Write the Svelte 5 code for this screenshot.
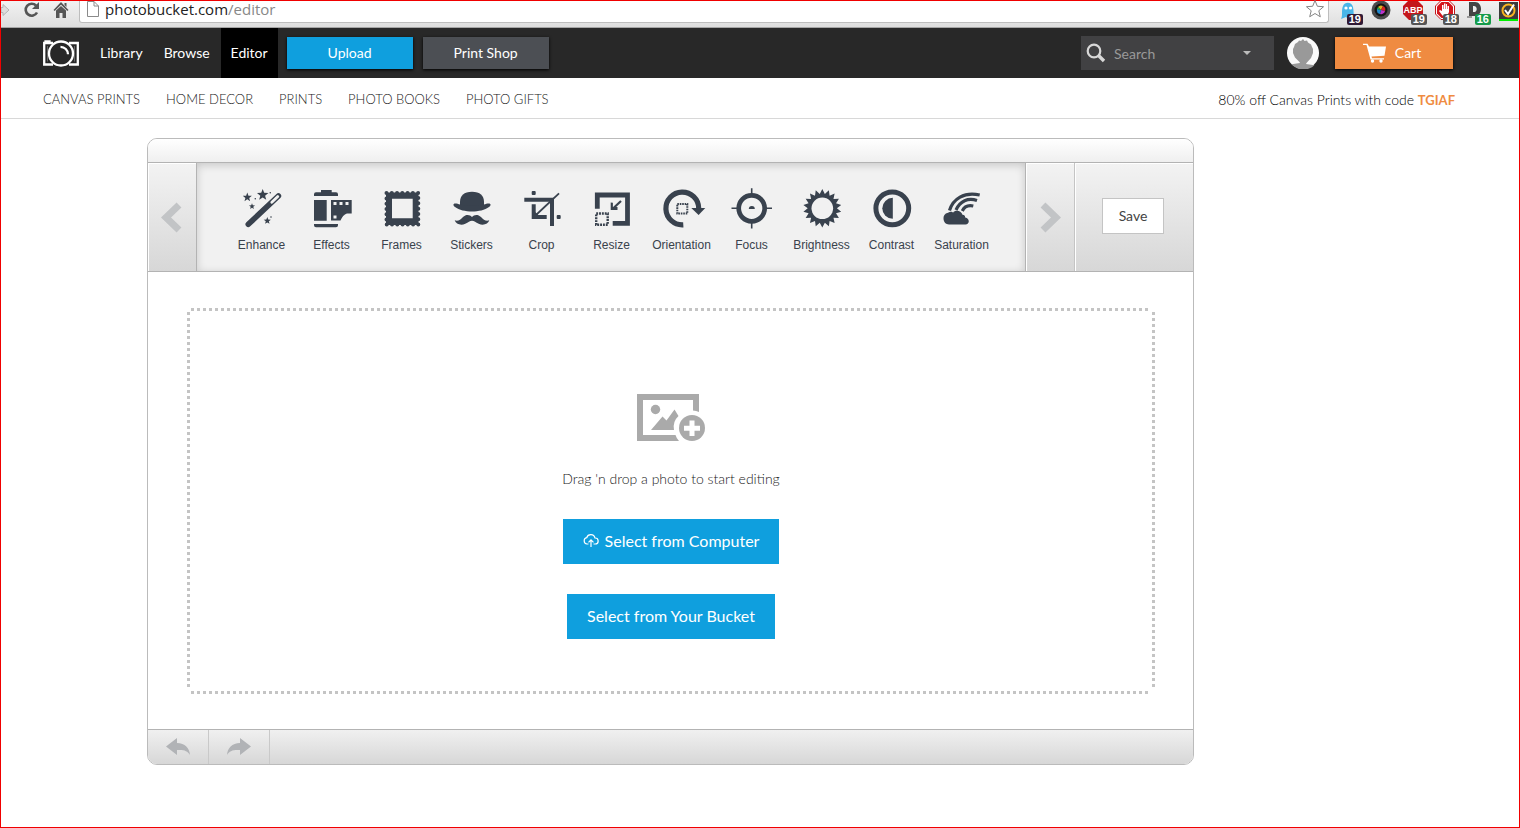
<script lang="ts">
	type Dot = { x: number; y: number; r: number };

	const navLinks = ['Library', 'Browse', 'Editor'];
	const shopLinks = ['Canvas Prints', 'Home Decor', 'Prints', 'Photo Books', 'Photo Gifts'];
	const tools = ['Enhance', 'Effects', 'Frames', 'Stickers', 'Crop', 'Resize', 'Orientation', 'Focus', 'Brightness', 'Contrast', 'Saturation'];

	let activeNav = $state('Editor');
	let activeTool = $state('');
	let query = $state('');

	function star(cx: number, cy: number, outer: number, inner: number, points: number) {
		let out: string[] = [];
		for (let i = 0; i < points * 2; i++) {
			const r = i % 2 ? inner : outer;
			const a = (Math.PI * i) / points - Math.PI / 2;
			out.push(`${(cx + r * Math.cos(a)).toFixed(2)},${(cy + r * Math.sin(a)).toFixed(2)}`);
		}
		return out.join(' ');
	}

	const sparkles: Dot[] = [
		{ x: 5.3, y: 8.3, r: 4.8 },
		{ x: 20.7, y: 5.9, r: 6 },
		{ x: 10, y: 17.4, r: 3.2 },
		{ x: 25.3, y: 31.8, r: 3.8 }
	];
</script>

<svelte:head><title>Photobucket Editor</title></svelte:head>

<div class="page">
	<div class="browser">
		<div class="browser-nav">
			<button aria-label="Forward">
				<svg width="10" height="18" viewBox="0 0 10 18"><path d="M0 6.500h2V3.500l6 5.500-6 5.500v-3H0z" fill="#ddd" stroke="#b5b5b5" /></svg>
			</button>
			<button aria-label="Reload">
				<svg width="18" height="18" viewBox="0 0 18 18"><path d="M14 11.500a6 6 0 1 1-1-7" fill="none" stroke="#555" stroke-width="2.600" /><path d="M16 1v7H9z" fill="#555" /></svg>
			</button>
			<button aria-label="Home">
				<svg width="16" height="18" viewBox="0 0 16 18"><path d="M8 1l7.500 8-1.200 1L8 3.800 1.700 10 .5 9z M3 9.600L8 5l5 4.600V17H9.500v-5h-3v5H3z M11.500 2h2v4l-2-2z" fill="#555" /></svg>
			</button>
		</div>
		<div class="omnibox">
			<svg width="12" height="16" viewBox="0 0 12 16"><path d="M.5.500H7L11.500 5v10.500H.5z M7 .500V5h4.500" fill="#fff" stroke="#8a8a8a" /></svg>
			<span class="url">photobucket.com<span class="path">/editor</span></span>
			<button class="bookmark" aria-label="Bookmark this page">
				<svg width="20" height="20" viewBox="0 0 20 20"><polygon points={star(10, 10.5, 9, 4, 5)} fill="#fff" stroke="#858585" /></svg>
			</button>
		</div>
		<div class="extensions">
			<button aria-label="Ghostery">
				<svg width="18" height="18" viewBox="0 0 18 18"><path d="M2 17C4 13 2 9 4 4c2-5 9-4 10 1 1 4 0 8 2 12l-3-2-3 3-3-3z" fill="#49b5e8" /><circle cx="7" cy="6" r="1.600" fill="#fff" /><circle cx="11.500" cy="6" r="1.600" fill="#fff" /></svg>
				<span class="count plum">19</span>
			</button>
			<button aria-label="Camera">
				<svg width="20" height="20" viewBox="0 0 20 20"><circle cx="10" cy="9" r="9.500" fill="#4b4b4b" /><circle cx="10" cy="9" r="6.500" fill="#151515" /><path d="M10 9L7 6a4 4 0 0 1 5-1z" fill="#e0b020" /><path d="M10 9l2-4a4 4 0 0 1 2 5z" fill="#d22" /><path d="M10 9l4 1a4 4 0 0 1-5 3z" fill="#b3c" /><path d="M10 9l-1 4a4 4 0 0 1-3-5z" fill="#28c" /><path d="M10 9L6 8l1-2z" fill="#2b4" /></svg>
			</button>
			<button aria-label="Adblock">
				<svg width="20" height="20" viewBox="0 0 20 20"><path d="M6-1h8l6 6v8l-6 6H6l-6-6V5z" fill="#c4161c" /><text x="10" y="12" text-anchor="middle" font-size="9" font-weight="700" fill="#fff">ABP</text></svg>
				<span class="count">19</span>
			</button>
			<button aria-label="Blocker">
				<svg width="20" height="20" viewBox="0 0 20 20"><path d="M6-.5h8L19.500 5v8L14 18.500H6L.5 13V5z" fill="#fff" stroke="#c4161c" /><path d="M6.500 1h7L18 5.500v7L13.500 17h-7L2 12.500v-7z" fill="#d3161c" /><path d="M7 14l-3-4 1-1 2 1V4h1.500v4h.5V2.500h1.500V8h.5V3H12v5h.5V5H14v6l-2 4H8z" fill="#fff" /></svg>
				<span class="count">18</span>
			</button>
			<button aria-label="Disconnect">
				<svg width="20" height="18" viewBox="0 0 20 18"><path d="M2 0h6c8 0 8 14 0 14H2z M6 4v6c5 1 5-7 0-6z" fill="#444" fill-rule="evenodd" /><path d="M0 14h5v2H0z" fill="#999" /></svg>
				<span class="count green">16</span>
			</button>
			<button aria-label="Security check">
				<svg width="19" height="19" viewBox="0 0 19 19"><path d="M0 0h19v19H0z" fill="#3b3b3b" /><circle cx="9.500" cy="8.500" r="6" fill="none" stroke="#f7b321" stroke-width="2" /><path d="M6 8l3 4 6-9.500" fill="none" stroke="#fff" stroke-width="2" /><path d="M0 17h19v2H0z" fill="#0e0" /></svg>
			</button>
		</div>
	</div>

	<header class="header">
		<a class="logo" href="/" aria-label="Photobucket home">
			<svg width="36" height="27" viewBox="0 0 36 27" fill="none" stroke="#fff" stroke-width="2.300">
				<path d="M10 3H1.200v21.500H10M26 3H34.800v21.500H26M2.500 3V1.500h4V3" />
				<circle cx="18" cy="13.500" r="12" />
				<path d="M17.500 6.800a7.500 7.500 0 0 1 7.500 7.500" />
				<path d="M4.500 6v15.500M31.500 6v15.500" stroke-width="1" opacity=".3" />
			</svg>
		</a>
		<nav class="main-nav">
			{#each navLinks as link (link)}
				<a href="#{link.toLowerCase()}" class:active={activeNav === link} onclick={() => (activeNav = link)}>{link}</a>
			{/each}
		</nav>
		<button class="btn upload">Upload</button>
		<button class="btn print">Print Shop</button>
		<form class="search" onsubmit={(e) => e.preventDefault()}>
			<svg width="20" height="20" viewBox="0 0 20 20" fill="none" stroke="#d8d8d8"><circle cx="8" cy="8" r="6.300" stroke-width="2.200" /><path d="M12.500 12.500l5.500 5.500" stroke-width="3.400" /></svg>
			<input type="text" placeholder="Search" aria-label="Search" bind:value={query} />
			<button type="button" aria-label="Search options">
				<svg width="8" height="4" viewBox="0 0 8 4"><path d="M0 0h8L4 4z" fill="#bbb" /></svg>
			</button>
		</form>
		<a class="avatar" href="#profile" aria-label="Profile">
			<svg width="32" height="32" viewBox="0 0 32 32">
				<circle cx="16" cy="16" r="16" fill="#fafafa" />
				<path d="M16 2l1.500 2L20 3.500l1 2 3 2 1 2.500 1 2v4l-2 5-4.500 5-.5 1 8.500 1.200A16 16 0 0 1 4.500 27.200L13 26l-.5-1L8 20.500 6 16v-4l1-2 1-3 3-2 1-1.500 2 .5z" fill="#999" />
			</svg>
		</a>
		<a class="btn cart" href="#cart">
			<svg width="24" height="20" viewBox="0 0 24 20"><path d="M0 .700h4.500L6 3.500h17l-1.500 9.300-13 .7.500 1.800h12v1.200H7.500L3.500 2H0z" fill="#fff" /><circle cx="9.500" cy="18" r="1.700" fill="#fff" /><circle cx="18" cy="18" r="1.700" fill="#fff" /></svg>
			Cart
		</a>
	</header>

	<div class="subnav">
		<nav>
			{#each shopLinks as link (link)}
				<a href="#shop">{link}</a>
			{/each}
		</nav>
		<p>80% off Canvas Prints with code <strong>TGIAF</strong></p>
	</div>

	<main class="editor">
		<div class="cap"></div>
		<div class="toolbar">
			<button class="arrow prev" aria-label="Previous tools">
				<svg width="21" height="31" viewBox="0 0 21 31"><path d="M18 3L5 15.500 18 28" fill="none" stroke="#c2c4c6" stroke-width="7" /></svg>
			</button>
			<div class="tools">
				{#each tools as tool (tool)}
					<button class="tool" aria-pressed={activeTool === tool} onclick={() => (activeTool = tool)}>
						<svg width="40" height="40" viewBox="0 0 40 40">
							{#if tool === 'Enhance'}
								{#each sparkles as s}
									<polygon points={star(s.x, s.y, s.r, s.r * 0.42, 5)} />
								{/each}
								<circle cx="13.300" cy="9.700" r=".8" /><circle cx="28.300" cy="3.700" r=".8" /><circle cx="29" cy="28" r=".8" />
								<path class="line" d="M6.300 35.300L36.400 7" stroke-width="5.600" stroke-linecap="round" />
								<path d="M29.800 13.200l6-5.600" stroke="#f1f1f1" stroke-width="2.800" stroke-linecap="round" />
							{:else if tool === 'Effects'}
								<path d="M9 3.300V1h10.700v2.300H24a2 2 0 0 1 2 2V7H2V5.300a2 2 0 0 1 2-2z M2 11h12.700v20.700H2z M2 35h24v1.300a2 2 0 0 1-2 2H4a2 2 0 0 1-2-2z" />
								<path d="M19 11h20.700v13.500H36c-3 0-5 2-7.500 7H19z M21.500 13v3h3v-3z M27.500 13v3h3v-3z M33.500 13v3h3v-3z M21.500 26.500v3h3v-3z" fill-rule="evenodd" />
							{:else if tool === 'Frames'}
								<path d="M4 3.500h32.500v32.500H4z M10 9.700v19.600h20.700V9.700z" fill-rule="evenodd" />
								<path class="line" d="M4.500 4h31.800v31.500H4.500z" stroke-width="4" stroke-dasharray="0 5.270" stroke-linecap="round" />
							{:else if tool === 'Stickers'}
								<path d="M8 17V13C8 6.500 12 2.700 20 2.700S32 6.500 32 13v4z" />
								<path d="M8 15.500c6 1.800 18 1.800 24 0 2-.7 4.500-1.500 6-.8 1.200.8.500 2.300-1 3.300-8 6-26 6-34 0-1.500-1-2.200-2.500-1-3.300 1.500-.7 4 .1 6 .8z" />
								<path d="M20 28c2-2.500 6-3 9 0 2.500 2.700 5 4.500 8.300 3.300-1 3.700-6 5.500-10.600 3.500-3-1.300-4.500-3-6.700-3s-3.700 1.700-6.700 3c-4.600 2-9.600.2-10.600-3.500C6 32.500 8.500 30.700 11 28c3-3 7-2.500 9 0z" />
							{:else if tool === 'Crop'}
								<path class="line" d="M2.300 10.700H30V37" stroke-width="4" />
								<path class="line" d="M11.700 15.200V28h13" stroke-width="4" />
								<path class="line" d="M37 4.300L14 26" stroke-width="1.800" />
								<path d="M12 22l6.500 6H12z" />
								<rect x="9.700" y="2" width="4" height="4" rx="1" /><rect x="34.700" y="26" width="4" height="4" rx="1" />
							{:else if tool === 'Resize'}
								<path class="line" d="M5.300 19.700V6h30.200v28.300H20.700" stroke-width="4.800" />
								<path class="line" d="M29 12l-8.500 8" stroke-width="2.200" /><path d="M18.700 13.500l2.200.3V18h4.600v3h-6.800z" />
								<path class="line" d="M4.200 24.500h11.500v11.300H4.200z" stroke-width="2.400" stroke-dasharray="1.900 .95" />
							{:else if tool === 'Orientation'}
								<path class="line" d="M21.300 35.800A16.400 16.400 0 1 1 36.700 19.300" stroke-width="5.200" />
								<path d="M29.300 19h14l-6.700 7z" />
								<path class="line" d="M15.300 15h10v9.600h-10z" stroke-width="2" stroke-dasharray="1.600 .85" />
							{:else if tool === 'Focus'}
								<circle class="line" cx="19.700" cy="19.300" r="13" stroke-width="4.700" />
								<path class="line" d="M19.700-.7v7M19.700 32v7.500M-.5 19.300h7M33 19.300h7" stroke-width="1.600" />
								<path d="M16.800 20a3 3 0 0 1 6 0z" />
							{:else if tool === 'Brightness'}
								<polygon points={star(20.3, 19.3, 19.2, 14.6, 18)} />
								<circle cx="20.300" cy="19.300" r="10.800" fill="#f1f1f1" />
							{:else if tool === 'Contrast'}
								<circle class="line" cx="20.300" cy="19.300" r="16.400" stroke-width="5" />
								<path d="M20.800 8.800v21a10.500 10.500 0 0 1 0-21z" />
							{:else}
								<path class="line" d="M7.500 21.500C11 10 22 2.500 37.700 6M14 21C18 12 26 8.500 35 11.500M20.300 22c2-4.500 6-6 11-5" stroke-width="3.200" />
								<path d="M7 35.500a6 6 0 0 1-1-11.800c3-1.700 4.500-.5 5 0 2-3 8-2.500 9.500 2 2 .1 2.500 1 2.700 2.800 5 1 4.500 7 .3 7z" />
							{/if}
						</svg>
						<span>{tool}</span>
					</button>
				{/each}
			</div>
			<button class="arrow next" aria-label="Next tools">
				<svg width="21" height="31" viewBox="0 0 21 31"><path d="M3 3l13 12.500L3 28" fill="none" stroke="#c2c4c6" stroke-width="7" /></svg>
			</button>
			<div class="save-area"><button class="save">Save</button></div>
		</div>

		<div class="canvas">
			<div class="dropzone">
				<svg width="68" height="48" viewBox="0 0 68 48">
					<path d="M0 0h62v18a14 14 0 0 0-6-1.500V6H6v35h32.500a14 14 0 0 0 3.500 6H0z" fill="#aaa" />
					<circle cx="18.500" cy="15.500" r="4.700" fill="#aaa" />
					<path d="M14 36L25.500 22.500l4 4L37.500 15.500l4 6.500a15 15 0 0 0-4.500 14z" fill="#aaa" />
					<circle cx="55" cy="34" r="13" fill="#aaa" />
					<path d="M55 26.500v15.500M47 34.200h16" stroke="#fff" stroke-width="5" />
				</svg>
				<p>Drag 'n drop a photo to start editing</p>
				<button class="pick">
					<svg width="16" height="13" viewBox="0 0 16 13" fill="none" stroke="#fff" stroke-width="1.200"><path d="M5.500 10H4a3.200 3.200 0 0 1-.3-6.300A4.300 4.300 0 0 1 12 4a3 3 0 0 1 .3 6h-1.800M8 13V6M5.500 8.300L8 5.800l2.500 2.500" /></svg>
					Select from Computer
				</button>
				<button class="pick">Select from Your Bucket</button>
			</div>
		</div>

		<div class="history">
			<button aria-label="Undo">
				<svg width="24" height="18" viewBox="0 0 24 18"><path d="M0 8.500L11 0v5c8 0 12.500 5 13 12-2.500-4.500-6.500-5.500-13-5v5z" fill="#b1b3b6" /></svg>
			</button>
			<button aria-label="Redo">
				<svg width="24" height="18" viewBox="0 0 24 18"><path d="M24 8.500L13 0v5C5 5 .5 10 0 17c2.500-4.500 6.500-5.500 13-5v5z" fill="#b1b3b6" /></svg>
			</button>
		</div>
	</main>
</div>

<style>
	:global(body) { background: #fff; }
	* { box-sizing: border-box; }
	.page { min-height: 100vh; border: 1px solid #f00000; font-family: Lato, "Open Sans", sans-serif; font-size: 13px; color: #333; }
	button { font: inherit; border: 0; padding: 0; background: none; color: inherit; cursor: pointer; }
	a { color: inherit; text-decoration: none; }
	p { margin: 0; }
	svg { display: block; flex-shrink: 0; }

	.browser { display: flex; height: 27px; background: linear-gradient(#f2f2f2, #dedede); border-bottom: 1px solid #a5a5a5; }
	.browser-nav { display: flex; gap: 12px; width: 78px; height: 18px; }
	.omnibox { flex: 1; display: flex; align-items: center; gap: 6px; height: 22px; padding: 0 3px 5px 7px; background: #fff; border: 1px solid #bdbdbd; border-top: 0; border-radius: 0 0 3px 3px; }
	.url { flex: 1; font: 15px/18px "Open Sans", "Noto Sans", sans-serif; color: #222; }
	.path { color: #888; }
	.extensions { display: flex; gap: 12px; padding-left: 10px; }
	.extensions button { position: relative; width: 20px; height: 20px; }
	.extensions text { font-family: "Liberation Sans", Arial, sans-serif; }
	.count { position: absolute; right: -4px; bottom: -4px; padding: 0 2px; border-radius: 2px; background: #555; color: #fff; font: bold 11px/11px "Liberation Sans", Arial, sans-serif; }
	.plum { background: #301934; }
	.green { background: #169b4a; }

	.header { display: flex; align-items: center; height: 50px; padding: 0 66px 0 42px; background: #282828; color: #fff; font-size: 14px; }
	.logo { margin-right: 11px; }
	.main-nav { display: flex; gap: 1px; margin-right: 9px; }
	.main-nav a { padding: 0 10px; line-height: 50px; }
	.main-nav .active { background: #000; }
	.btn { width: 126px; height: 32px; margin-right: 10px; line-height: 32px; text-align: center; box-shadow: 0 1px 3px #000; }
	.upload { background: #0f9fde; }
	.print { background: #4c4f54; }
	.search { display: flex; align-items: center; width: 193px; height: 34px; margin-left: auto; padding: 0 23px 0 5px; background: #414143; }
	.search input { flex: 1; min-width: 0; margin-left: 5px; padding: 0 3px; border: 0; outline: 0; background: none; color: #fff; font: inherit; }
	.search input::placeholder { color: #999; opacity: 1; }
	.avatar { margin: 0 16px 0 13px; }
	.cart { display: flex; align-items: center; justify-content: center; gap: 8px; width: 118px; margin: 0; padding-right: 4px; background: #ef8b41; }

	.subnav { display: flex; align-items: center; justify-content: space-between; height: 41px; padding: 2px 64px 0 42px; border-bottom: 1px solid #d8d8d8; color: #000; }
	.subnav nav { display: flex; gap: 26px; color: #222; font-weight: 300; text-transform: uppercase; }
	.subnav p { font-size: 14px; font-weight: 300; }
	.subnav strong { color: #ef8b41; font-size: 13px; font-weight: 700; }

	.editor { margin: 19px 325px 0 146px; border: 1px solid #bbb; border-radius: 10px; overflow: hidden; }
	.cap { height: 24px; background: linear-gradient(#fff, #efefef); border-bottom: 1px solid #b3b3b3; }
	.toolbar { display: flex; height: 109px; border-bottom: 1px solid #b3b3b3; background: linear-gradient(#f3f3f3, #d7d7d7); }
	.arrow { display: flex; align-items: center; justify-content: center; width: 49px; padding-right: 2px; box-shadow: inset 1px 1px #fff; }
	.prev { border-right: 1px solid #b3b3b3; }
	.next { width: 50px; padding: 0; border-left: 1px solid #b3b3b3; border-right: 1px solid #c4c4c4; }
	.tools { flex: 1; display: flex; justify-content: center; padding-left: 1px; background: #f1f1f1; box-shadow: inset 0 2px 8px rgba(0, 0, 0, 0.18); }
	.tool { display: flex; flex-direction: column; align-items: center; gap: 9px; width: 70px; padding-top: 26px; color: #39424c; font: 12px/14px "Liberation Sans", Arial, sans-serif; }
	.tool svg { overflow: visible; fill: #39424e; }
	.tool .line { fill: none; stroke: #39424e; }
	.save-area { display: flex; align-items: center; justify-content: center; width: 118px; padding: 0 2px 2px 0; box-shadow: inset 1px 1px #fff; }
	.save { width: 62px; height: 36px; padding-bottom: 2px; border: 1px solid #c4c4c4; background: #fff; color: #444; font-size: 14px; }

	.canvas { padding: 36px 38px 35px 39px; }
	.dropzone {
		--dots: #c4c4c4 0 3px, transparent 3px 6px;
		display: flex; flex-direction: column; align-items: center; height: 386px; padding-top: 86px;
		background:
			repeating-linear-gradient(90deg, var(--dots)) 4px 0 / calc(100% - 8px) 3px no-repeat,
			repeating-linear-gradient(90deg, var(--dots)) 4px 100% / calc(100% - 8px) 3px no-repeat,
			repeating-linear-gradient(var(--dots)) 0 4px / 3px calc(100% - 8px) no-repeat,
			repeating-linear-gradient(var(--dots)) 100% 4px / 3px calc(100% - 8px) no-repeat;
	}
	.dropzone p { margin: 28px 0 31px; line-height: 18px; font-size: 14px; font-weight: 300; color: #222; }
	.pick { display: flex; align-items: center; gap: 6px; height: 45px; margin-bottom: 30px; padding: 0 20px 2px; background: #0f9fde; color: #fff; font-size: 16px; }

	.history { display: flex; height: 35px; border-top: 1px solid #b3b3b3; background: linear-gradient(#f0f0f0, #d7d7d7); }
	.history button { display: flex; align-items: center; justify-content: center; width: 61px; border-right: 1px solid #c9c9c9; }
</style>
